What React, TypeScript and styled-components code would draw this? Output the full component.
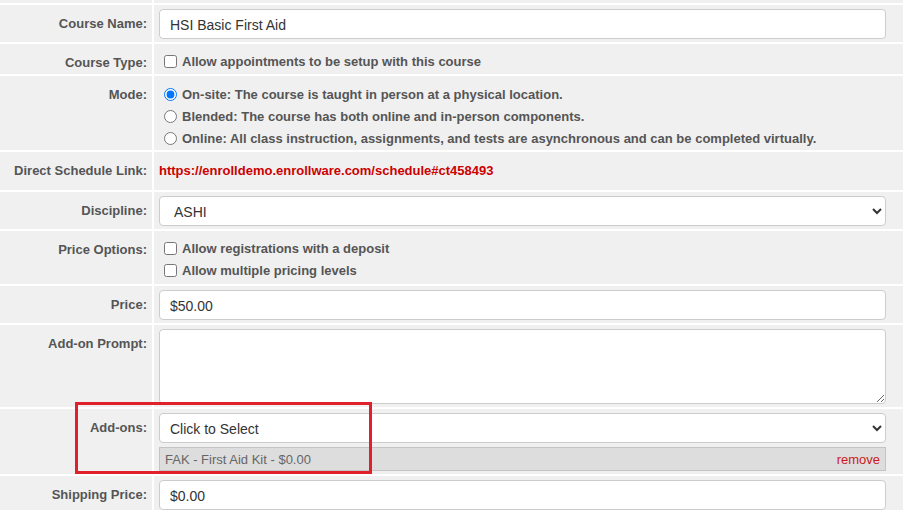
import { ChangeEvent, useState } from 'react'
import styled, { createGlobalStyle } from 'styled-components'

const GlobalStyle = createGlobalStyle`
  html, body {
    margin: 0;
    padding: 0;
    background: #fff;
    font-family: "Liberation Sans", Arial, sans-serif;
  }
`

const Page = styled.div`
  position: relative;
  width: 922px;
  height: 510px;
  overflow: hidden;
`

const FormGrid = styled.div`
  display: grid;
  grid-template-columns: 152px 749px;
  gap: 2px;
`

const Label = styled.div<{ $h?: number }>`
  background: #f0f0f0;
  color: #555;
  font-size: 13px;
  font-weight: bold;
  line-height: 16px;
  text-align: right;
  padding: ${p => (p.$h === undefined ? '11px 5px 0 0' : '0')};
  height: ${p => (p.$h === undefined ? 'auto' : `${p.$h}px`)};
`

const Field = styled.div<{ $top?: number; $bottom?: number }>`
  background: #f0f0f0;
  padding: ${p => p.$top ?? 4}px 17px ${p => p.$bottom ?? 3}px 5px;
  display: flex;
  flex-direction: column;
  min-width: 0;
`

const TextInput = styled.input`
  box-sizing: border-box;
  width: 100%;
  height: 30px;
  border: 1px solid #ccc;
  border-radius: 4px;
  background: #fff;
  padding: 1px 10px 0;
  font-family: inherit;
  font-size: 14px;
  color: #333;
  outline: none;
`

const Select = styled.select<{ $indent?: number }>`
  box-sizing: border-box;
  width: 100%;
  height: 30px;
  border: 1px solid #ccc;
  border-radius: 4px;
  background: #fff;
  padding: 1px 6px 0 ${p => p.$indent ?? 6}px;
  font-family: inherit;
  font-size: 14px;
  color: #333;
  outline: none;
`

const TextArea = styled.textarea`
  box-sizing: border-box;
  width: 100%;
  height: 75px;
  display: block;
  border: 1px solid #ccc;
  border-radius: 4px;
  background: #fff;
  padding: 6px 10px;
  font-family: inherit;
  font-size: 14px;
  color: #333;
  outline: none;
`

const Option = styled.label`
  display: flex;
  align-items: center;
  height: 22px;
  color: #555;
  font-size: 13px;
  font-weight: bold;
  white-space: nowrap;

  input {
    width: 13px;
    height: 13px;
    margin: 0 5px 0 5px;
  }
`

const LinkText = styled.a`
  display: block;
  padding-top: 7px;
  line-height: 16px;
  color: #cc0000;
  font-size: 13px;
  font-weight: bold;
  text-decoration: none;
`

const Chip = styled.div`
  box-sizing: border-box;
  margin-top: 4px;
  height: 24px;
  display: flex;
  align-items: center;
  justify-content: space-between;
  padding: 1px 5px 0 5px;
  background: #dddddd;
  border: 1px solid #c4c4c4;
  color: #666;
  font-size: 13px;
`

const RemoveLink = styled.a`
  color: #cc1a1a;
  text-decoration: none;
  cursor: pointer;
`

const Highlight = styled.div`
  position: absolute;
  left: 75px;
  top: 402px;
  width: 297px;
  height: 72px;
  box-sizing: border-box;
  border: 3px solid #e0202a;
  pointer-events: none;
`

const modes = [
  'On-site: The course is taught in person at a physical location.',
  'Blended: The course has both online and in-person components.',
  'Online: All class instruction, assignments, and tests are asynchronous and can be completed virtually.',
]

function App() {
  const [name, setName] = useState('HSI Basic First Aid')
  const [price, setPrice] = useState('$50.00')
  const [shipping, setShipping] = useState('$0.00')
  const [mode, setMode] = useState(0)
  const [addons, setAddons] = useState(['FAK - First Aid Kit - $0.00'])

  function handleName(event: ChangeEvent<HTMLInputElement>) {
    setName(event.currentTarget.value)
  }

  return (
    <Page>
      <GlobalStyle />
      <FormGrid>
        <Label $h={3} />
        <Label $h={3} />

        <Label>Course Name:</Label>
        <Field>
          <TextInput value={name} onChange={handleName} />
        </Field>

        <Label>Course Type:</Label>
        <Field $top={6} $bottom={2}>
          <Option><input type="checkbox" />Allow appointments to be setup with this course</Option>
        </Field>

        <Label>Mode:</Label>
        <Field $top={7} $bottom={1}>
          {modes.map((m, i) => (
            <Option key={i}>
              <input type="radio" name="mode" checked={mode === i} onChange={() => setMode(i)} />
              {m}
            </Option>
          ))}
        </Field>

        <Label>Direct Schedule Link:</Label>
        <Field $top={4} $bottom={11}>
          <LinkText href="#ct458493">https://enrolldemo.enrollware.com/schedule#ct458493</LinkText>
        </Field>

        <Label>Discipline:</Label>
        <Field>
          <Select $indent={10} defaultValue="ASHI">
            <option>ASHI</option>
            <option>HSI</option>
          </Select>
        </Field>

        <Label>Price Options:</Label>
        <Field $top={6} $bottom={3}>
          <Option><input type="checkbox" />Allow registrations with a deposit</Option>
          <Option><input type="checkbox" />Allow multiple pricing levels</Option>
        </Field>

        <Label>Price:</Label>
        <Field>
          <TextInput value={price} onChange={e => setPrice(e.currentTarget.value)} />
        </Field>

        <Label>Add-on Prompt:</Label>
        <Field>
          <TextArea />
        </Field>

        <Label>Add-ons:</Label>
        <Field>
          <Select defaultValue="">
            <option value="">Click to Select</option>
          </Select>
          {addons.map(a => (
            <Chip key={a}>
              <span>{a}</span>
              <RemoveLink onClick={() => setAddons(addons.filter(x => x !== a))}>remove</RemoveLink>
            </Chip>
          ))}
        </Field>

        <Label>Shipping Price:</Label>
        <Field>
          <TextInput value={shipping} onChange={e => setShipping(e.currentTarget.value)} />
        </Field>
      </FormGrid>
      <Highlight />
    </Page>
  )
}

export default App
